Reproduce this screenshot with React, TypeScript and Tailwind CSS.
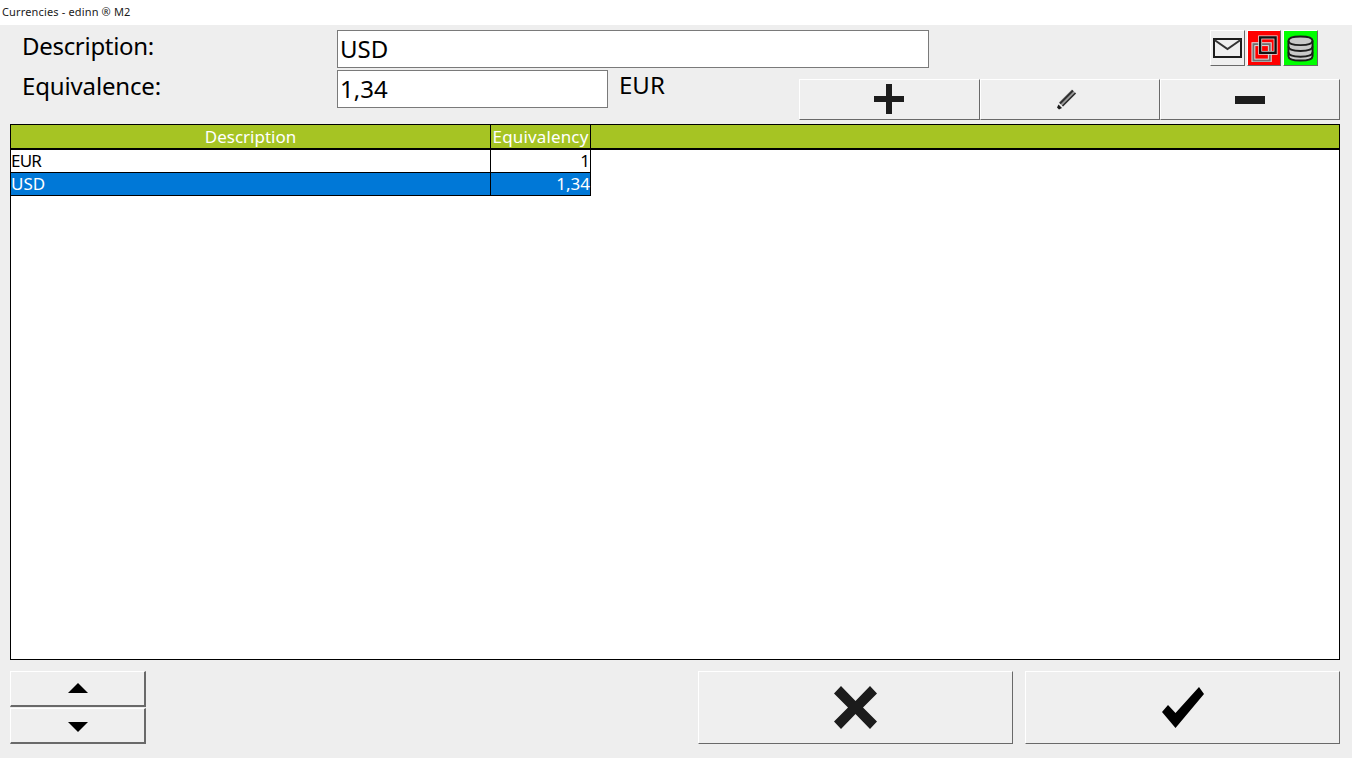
const FONT = "font-['Noto_Sans','Liberation_Sans',sans-serif]";

const Raised = ({ className, children }: { className: string; children?: React.ReactNode }) => (
    <button
        type="button"
        className={`flex items-center justify-center bg-[#efefef] border-t border-l border-t-white border-l-white border-r border-b border-r-[#696969] border-b-[#696969] ${className}`}
    >
        {children}
    </button>
);

const PlusIcon = () => (
    <svg className="mr-[2px] -mt-[1px]" width="30" height="30" viewBox="0 0 30 30">
        <path d="M12 0h6v12h12v6H18v12h-6V18H0v-6h12z" fill="#1c1c1c" />
    </svg>
);

const PencilIcon = () => (
    <svg className="mr-[7px]" width="22" height="22" viewBox="0 0 22 22">
        <path d="M5 15.500L18 2.500" stroke="#9a9a9a" strokeWidth="6" />
        <path d="M4 14.500L17 1.500" stroke="#303030" strokeWidth="2" />
        <path d="M6.500 17L19.500 4" stroke="#2a2a2a" strokeWidth="1.500" />
        <path d="M2.500 15.500l3.500 3.500-3 1.500-2-2z" fill="#1c1c1c" />
    </svg>
);

const MailIcon = () => (
    <svg className="mr-[1px]" width="29" height="20" viewBox="0 0 29 20">
        <rect x="1" y="1" width="27" height="18" fill="none" stroke="#1c1c1c" strokeWidth="2" />
        <path d="M1.500 2L14.500 11 27.500 2" fill="none" stroke="#333" strokeWidth="2" />
    </svg>
);

const CopyIcon = () => (
    <svg width="27" height="27" viewBox="0 0 28 28">
        <rect x="2.500" y="9.500" width="17" height="17" fill="none" stroke="#e0e0e0" strokeWidth="4" />
        <rect x="2.500" y="9.500" width="17" height="17" fill="none" stroke="#707070" strokeWidth="2" />
        <rect x="9.500" y="2.500" width="16" height="16" fill="none" stroke="#e8e8e8" strokeWidth="4" />
        <rect x="9.500" y="2.500" width="16" height="16" fill="none" stroke="#111" strokeWidth="2.500" />
    </svg>
);

const DatabaseIcon = () => (
    <svg width="27" height="27" viewBox="0 0 28 28">
        <path d="M1.500 6C1.500 3 7 1.500 14 1.500S26.500 3 26.500 6v16c0 3-5.500 4.500-12.500 4.500S1.500 25 1.500 22z" fill="#c8c8c8" stroke="#1c1c1c" strokeWidth="2" />
        <path d="M1.500 6c0 3 5.500 4.500 12.500 4.500S26.500 9 26.500 6M1.500 12c0 3 5.500 4.500 12.500 4.500S26.500 15 26.500 12M1.500 18c0 3 5.500 4.500 12.500 4.500S26.500 21 26.500 18" fill="none" stroke="#1c1c1c" strokeWidth="2" />
    </svg>
);

const rows = [
    { id: 'EUR', value: '1', selected: false },
    { id: 'USD', value: '1,34', selected: true },
];

export default function App() {
    return (
        <div className={`h-[758px] w-[1352px] overflow-hidden flex flex-col bg-[#eeeeee] text-black ${FONT}`}>
            {/* Title bar */}
            <div className="h-[25px] bg-white flex items-center pl-[2px] text-[11px] tracking-[0.15px] text-[#1a1a1a]">
                Currencies - edinn ® M2
            </div>

            {/* Form */}
            <div className="pt-[5px] flex items-center h-[43px]">
                <span className="w-[315px] ml-[22px] text-[24px] leading-none -mt-[7px] tracking-[-0.3px]">Description:</span>
                <div className="w-[592px] h-[38px] bg-white border border-[#7a7a7a] flex items-center pl-[2px] text-[24px]">USD</div>
                <div className="ml-auto mr-[34px] -mt-[2px] flex gap-[2px]">
                    <Raised className="w-[35px] h-[36px]"><MailIcon /></Raised>
                    <Raised className="w-[34px] h-[36px] !bg-[#ff0000]"><CopyIcon /></Raised>
                    <Raised className="w-[35px] h-[36px] !bg-[#00ff00]"><DatabaseIcon /></Raised>
                </div>
            </div>
            <div className="mt-[2px] flex items-start h-[50px]">
                <span className="w-[315px] ml-[22px] text-[24px] leading-none mt-[4px] tracking-[-0.15px]">Equivalence:</span>
                <div className="w-[271px] h-[38px] bg-white border border-[#7a7a7a] flex items-center pl-[2px] text-[24px]">1,34</div>
                <span className="ml-[11px] text-[24px] leading-none mt-[3px]">EUR</span>
                <div className="ml-auto mr-[12px] mt-[9px] flex">
                    <Raised className="w-[181px] h-[41px]"><PlusIcon /></Raised>
                    <Raised className="w-[180px] h-[41px]"><PencilIcon /></Raised>
                    <Raised className="w-[180px] h-[41px]">
                        <span className="block w-[30px] h-[8px] bg-[#1c1c1c]" />
                    </Raised>
                </div>
            </div>

            {/* Grid */}
            <div className="ml-[10px] w-[1330px] mt-[4px] h-[536px] border border-black bg-white flex flex-col">
                <div className="h-[25px] shrink-0 bg-[#a6c423] border-b-2 border-black flex text-white text-[17px] leading-[24px]">
                    <div className="w-[480px] border-r border-black text-center">Description</div>
                    <div className="w-[100px] border-r border-black text-center tracking-[0.15px] whitespace-nowrap">Equivalency</div>
                </div>
                {rows.map(row => (
                    <div
                        key={row.id}
                        className={`w-[580px] h-[23px] shrink-0 flex border-b border-r border-black text-[17px] leading-[22px] ${row.selected ? 'bg-[#0078d7] text-white' : 'bg-white text-black'}`}
                    >
                        <div className={`w-[480px] border-r border-black ${row.selected ? '' : 'tracking-[-0.8px]'}`}>{row.id}</div>
                        <div className="flex-1 text-right">{row.value}</div>
                    </div>
                ))}
            </div>

            {/* Footer */}
            <div className="mx-[10px] mt-[11px] flex items-start">
                <div className="flex flex-col gap-[1px]">
                    <Raised className="w-[136px] h-[36px] border-r-2 border-b-2">
                        <svg className="-mt-[2px]" width="20" height="10" viewBox="0 0 20 10"><path d="M10 0l10 10H0z" fill="#000" /></svg>
                    </Raised>
                    <Raised className="w-[136px] h-[36px] border-r-2 border-b-2">
                        <svg className="mt-[2px]" width="20" height="10" viewBox="0 0 20 10"><path d="M0 0h20L10 10z" fill="#000" /></svg>
                    </Raised>
                </div>
                <Raised className="w-[315px] h-[73px] ml-[552px]">
                    <svg width="43" height="43" viewBox="0 0 43 43">
                        <path d="M7 0l14.500 15L36 0l7 7.500L29 21.500l14 14L36 43 21.500 28 7 43l-7-7.500 14-14L0 7.500z" fill="#1c1c1c" />
                    </svg>
                </Raised>
                <Raised className="w-[315px] h-[73px] ml-[12px]">
                    <svg width="42" height="41" viewBox="0 0 42 41">
                        <path d="M37 0l5 7-28.500 34L0 25l6-7 7.500 8z" fill="#000" />
                    </svg>
                </Raised>
            </div>
        </div>
    );
}
